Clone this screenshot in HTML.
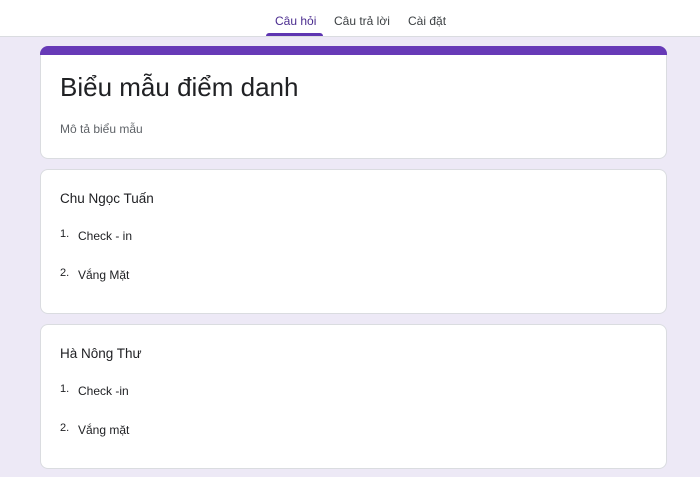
<!DOCTYPE html>
<html><head><meta charset="utf-8"><style>
*{margin:0;padding:0;box-sizing:border-box}
body{width:700px;height:477px;overflow:hidden;background:#ede9f6;font-family:"Liberation Sans",sans-serif;color:#202124;position:relative}
.hdr{position:absolute;left:0;top:0;width:700px;height:37px;background:#fff;border-bottom:1px solid #dadce0}
.tab{position:absolute;top:14px;font-size:12px;color:#3c4043}
.ul{position:absolute;left:266px;top:33px;width:57px;height:3px;background:#5e35b1;border-radius:3px 3px 0 0}
.card{position:absolute;left:40px;width:627px;background:#fff;border:1px solid #dadce0;border-radius:8px}
.top{position:absolute;left:40px;top:46px;width:627px;height:9px;background:#673ab7;border-radius:8px 8px 0 0}
.t{position:absolute;font-size:13px}
.n{position:absolute;font-size:11px;color:#202124}
</style></head><body>
<div class="hdr">
<span class="tab" style="left:275px;color:#4a2c8f">Câu hỏi</span>
<span class="tab" style="left:334px">Câu trả lời</span>
<span class="tab" style="left:408px">Cài đặt</span>
<div class="ul"></div>
</div>
<div class="card" style="top:46px;height:113px;border-top:none"></div>
<div class="top"></div>
<div class="t" style="left:60px;top:72px;font-size:26px">Biểu mẫu điểm danh</div>
<div class="t" style="left:60px;top:122px;font-size:12px;color:#5f6368">Mô tả biểu mẫu</div>

<div class="card" style="top:169px;height:145px"></div>
<div class="t" style="left:60px;top:191px;font-size:13.5px">Chu Ngọc Tuấn</div>
<div class="n" style="left:60px;top:228px">1.</div><div class="t" style="left:78px;top:229px;font-size:12px">Check - in</div>
<div class="n" style="left:60px;top:267px">2.</div><div class="t" style="left:78px;top:268px;font-size:12px">Vắng Mặt</div>

<div class="card" style="top:324px;height:145px"></div>
<div class="t" style="left:60px;top:346px;font-size:13.5px">Hà Nông Thư</div>
<div class="n" style="left:60px;top:383px">1.</div><div class="t" style="left:78px;top:384px;font-size:12px">Check -in</div>
<div class="n" style="left:60px;top:422px">2.</div><div class="t" style="left:78px;top:423px;font-size:12px">Vắng mặt</div>
</body></html>
